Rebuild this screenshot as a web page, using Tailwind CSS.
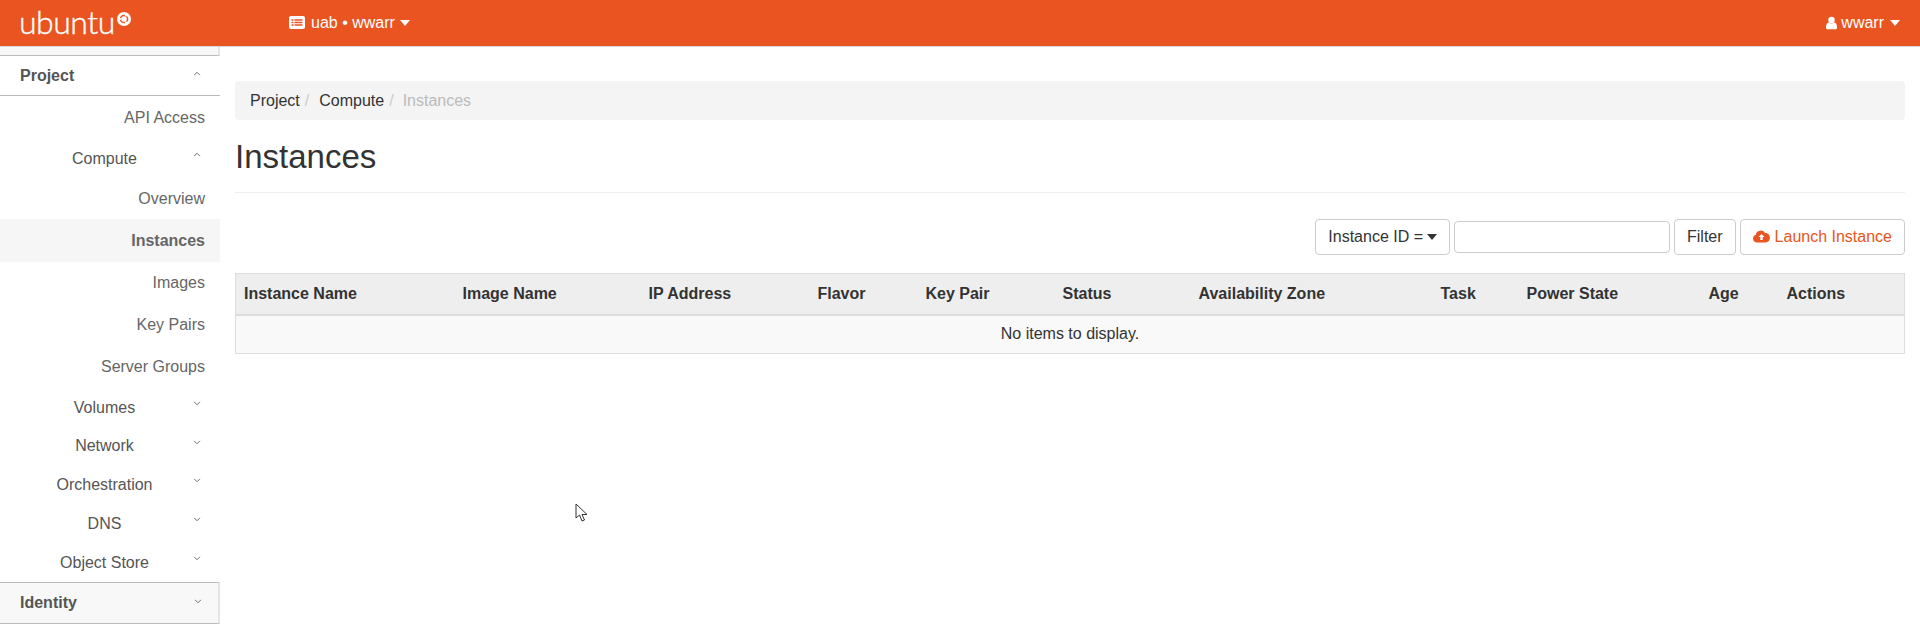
<!DOCTYPE html>
<html lang="en">
<head>
  <meta charset="UTF-8">
  <title>Instances</title>
  <script src="https://cdn.jsdelivr.net/npm/@tailwindcss/browser@4"></script>
</head>
<body class="bg-white text-[#333] font-['Liberation_Sans',Arial,sans-serif] text-[16px] h-[627px] overflow-hidden">

  <!-- top bar -->
  <header class="h-[47px] bg-[#e95420] border-b border-[#d9d9d9] flex items-center text-white">
    <div class="w-[270px] pl-[19px] flex items-start">
      <span class="font-['Lato',sans-serif] font-light text-[32px] tracking-[-0.5px] leading-[42px] -mt-[2px] [-webkit-text-stroke:0.4px_#fff]">ubuntu</span>
      <svg class="w-[14px] h-[14px] mt-[9px] ml-[2px]" viewBox="0 0 14 14">
        <circle cx="7" cy="7" r="7" fill="#fff"/>
        <circle cx="7" cy="7" r="3.6" fill="none" stroke="#e95420" stroke-width="1.5"/>
        <circle cx="3" cy="7" r="1.1" fill="#fff"/>
        <circle cx="9" cy="3.5" r="1.1" fill="#fff"/>
        <circle cx="9" cy="10.5" r="1.1" fill="#fff"/>
      </svg>
    </div>
    <div class="ml-[19px] flex items-center -mt-[1px]">
      <svg class="w-[16px] h-[13px] mr-[6px]" viewBox="0 0 16 13">
        <rect width="16" height="13" rx="2" fill="#fff"/>
        <path d="M2.500 4h2M2.500 6.500h2M2.500 9h2M5.500 4h8M5.500 6.500h8M5.500 9h8" stroke="#e95420" stroke-width="1.300"/>
      </svg>
      <span>uab • wwarr</span>
      <svg class="w-[10px] h-[6px] ml-[5px]" viewBox="0 0 10 6"><path d="M0 0h10L5 6z" fill="#fff"/></svg>
    </div>
    <div class="ml-auto pr-[20px] flex items-center -mt-[1px]">
      <svg class="w-[11px] h-[14px] mr-[4px]" viewBox="0 0 13 15">
        <circle cx="6.500" cy="4" r="3.800" fill="#fff"/>
        <path d="M0 13c0-4 1.500-6 3.500-6 1 .8 2 1.200 3 1.200s2-.4 3-1.200c2 0 3.500 2 3.500 6 0 1.300-1 2-2 2H2c-1 0-2-.7-2-2z" fill="#fff"/>
      </svg>
      <span>wwarr</span>
      <svg class="w-[10px] h-[6px] ml-[6px]" viewBox="0 0 10 6"><path d="M0 0h10L5 6z" fill="#fff"/></svg>
    </div>
  </header>

  <div class="flex">
    <!-- sidebar -->
    <nav class="w-[220px] shrink-0 text-[#666]">
      <div class="h-[9px] bg-[#f8f8f8] border-b border-[#bbb] border-r-2 border-r-[#e4e4e4]"></div>
      <div class="h-[40px] border-b border-[#bbb] pl-[20px] pr-[19px] flex items-center justify-between font-bold text-[#555]">
        <span>Project</span>
        <svg class="w-[8px] h-[5px] -mt-[4px]" viewBox="0 0 9 6"><path d="M1 5l3.500-3.500L8 5" fill="none" stroke="#666" stroke-width="1.100"/></svg>
      </div>
      <a class="h-[42px] pt-[2px] flex items-center justify-end pr-[15px]">API Access</a>
      <div class="h-[39px] pt-[2px] flex items-center text-[#555] relative">
        <span class="w-[209px] text-center">Compute</span>
        <svg class="w-[8px] h-[5px] absolute left-[193px] top-[14px]" viewBox="0 0 9 6"><path d="M1 5l3.500-3.500L8 5" fill="none" stroke="#666" stroke-width="1.100"/></svg>
      </div>
      <a class="h-[42px] pt-[2px] flex items-center justify-end pr-[15px]">Overview</a>
      <a class="h-[43px] flex items-center justify-end pr-[15px] bg-[#f6f6f6] font-bold">Instances</a>
      <a class="h-[42px] flex items-center justify-end pr-[15px]">Images</a>
      <a class="h-[42px] flex items-center justify-end pr-[15px]">Key Pairs</a>
      <a class="h-[42px] flex items-center justify-end pr-[15px]">Server Groups</a>
      <div class="h-[39px] flex items-center text-[#555] relative">
        <span class="w-[209px] text-center">Volumes</span>
        <svg class="w-[8px] h-[5px] absolute left-[193px] top-[13px]" viewBox="0 0 9 6"><path d="M1 1l3.500 3.500L8 1" fill="none" stroke="#666" stroke-width="1.100"/></svg>
      </div>
      <div class="h-[38px] flex items-center text-[#555] relative">
        <span class="w-[209px] text-center">Network</span>
        <svg class="w-[8px] h-[5px] absolute left-[193px] top-[13px]" viewBox="0 0 9 6"><path d="M1 1l3.500 3.500L8 1" fill="none" stroke="#666" stroke-width="1.100"/></svg>
      </div>
      <div class="h-[39px] flex items-center text-[#555] relative">
        <span class="w-[209px] text-center">Orchestration</span>
        <svg class="w-[8px] h-[5px] absolute left-[193px] top-[13px]" viewBox="0 0 9 6"><path d="M1 1l3.500 3.500L8 1" fill="none" stroke="#666" stroke-width="1.100"/></svg>
      </div>
      <div class="h-[39px] flex items-center text-[#555] relative">
        <span class="w-[209px] text-center">DNS</span>
        <svg class="w-[8px] h-[5px] absolute left-[193px] top-[13px]" viewBox="0 0 9 6"><path d="M1 1l3.500 3.500L8 1" fill="none" stroke="#666" stroke-width="1.100"/></svg>
      </div>
      <div class="h-[39px] flex items-center text-[#555] relative">
        <span class="w-[209px] text-center">Object Store</span>
        <svg class="w-[8px] h-[5px] absolute left-[193px] top-[13px]" viewBox="0 0 9 6"><path d="M1 1l3.500 3.500L8 1" fill="none" stroke="#666" stroke-width="1.100"/></svg>
      </div>
      <div class="h-[42px] bg-[#f8f8f8] border-y border-[#bbb] border-r-2 border-r-[#e4e4e4] pl-[20px] pr-[16px] flex items-center justify-between font-bold text-[#555]">
        <span>Identity</span>
        <svg class="w-[8px] h-[5px] -mt-[4px]" viewBox="0 0 9 6"><path d="M1 1l3.500 3.500L8 1" fill="none" stroke="#666" stroke-width="1.100"/></svg>
      </div>
    </nav>

    <!-- content -->
    <main class="flex-1 pl-[15px] pr-[15px] pt-[34px]">
      <ol class="h-[39px] bg-[#f4f4f4] rounded-[4px] flex items-center pl-[15px]">
        <li class="text-[#333]">Project</li>
        <li class="text-[#ccc] ml-[5px] mr-[10px]">/</li>
        <li class="text-[#333]">Compute</li>
        <li class="text-[#ccc] ml-[5px] mr-[9px]">/</li>
        <li class="text-[#bbb]">Instances</li>
      </ol>
      <h1 class="text-[33px] leading-[36px] text-[#333] mt-[19px]">Instances</h1>
      <hr class="mt-[17px] border-[#eee]">

      <div class="mt-[26px] h-[36px] flex justify-end items-center gap-[4px]">
        <button class="h-[36px] px-[12px] bg-white border border-[#ccc] rounded-[4px] text-[#333] flex items-center">
          Instance ID =
          <svg class="w-[10px] h-[6px] ml-[4px]" viewBox="0 0 10 6"><path d="M0 0h10L5 6z" fill="#333"/></svg>
        </button>
        <input class="w-[216px] h-[32px] bg-white border border-[#ccc] rounded-[4px]" type="text">
        <button class="h-[36px] px-[12px] bg-white border border-[#ccc] rounded-[4px] text-[#333]">Filter</button>
        <button class="h-[36px] pl-[12px] pr-[12px] bg-white border border-[#ccc] rounded-[4px] text-[#e95420] flex items-center">
          <svg class="w-[17px] h-[14px] mr-[5px] -mt-[2px]" viewBox="0 0 17 13">
            <path d="M4 13a4 4 0 0 1-1.200-7.800A5 5 0 0 1 12 3.500 4.800 4.800 0 0 1 13 13z" fill="#e95420"/>
            <path d="M8.500 4.500L11.500 7.500H9.700v3H7.300v-3H5.500z" fill="#fff"/>
          </svg>
          Launch Instance
        </button>
      </div>

      <table class="mt-[18px] w-full table-fixed border border-[#ddd] border-collapse">
        <thead>
          <tr class="h-[41px] bg-[#eee] border-b-2 border-[#ddd] text-left">
            <th class="w-[219px] pl-[8px] font-bold">Instance Name</th>
            <th class="w-[186px] pl-[8px] font-bold">Image Name</th>
            <th class="w-[169px] pl-[8px] font-bold">IP Address</th>
            <th class="w-[108px] pl-[8px] font-bold">Flavor</th>
            <th class="w-[137px] pl-[8px] font-bold">Key Pair</th>
            <th class="w-[136px] pl-[8px] font-bold">Status</th>
            <th class="w-[242px] pl-[8px] font-bold">Availability Zone</th>
            <th class="w-[86px] pl-[8px] font-bold">Task</th>
            <th class="w-[182px] pl-[8px] font-bold">Power State</th>
            <th class="w-[78px] pl-[8px] font-bold">Age</th>
            <th class="pl-[8px] font-bold">Actions</th>
          </tr>
        </thead>
        <tbody>
          <tr class="h-[39px] bg-[#f9f9f9]">
            <td colspan="11" class="text-center">No items to display.</td>
          </tr>
        </tbody>
      </table>
    </main>
  </div>

  <!-- mouse pointer caught in the screenshot -->
  <svg class="absolute left-[575px] top-[503px] w-[14px] h-[20px]" viewBox="0 0 14 20">
    <path d="M1 1v14l3.500-3 2.500 6 2.500-1-2.500-5.500H12z" fill="#fff" stroke="#333" stroke-width="1"/>
  </svg>
</body>
</html>
